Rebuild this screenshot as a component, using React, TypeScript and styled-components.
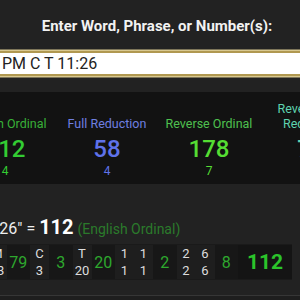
import React from 'react';
import styled, { createGlobalStyle } from 'styled-components';

const GlobalStyle = createGlobalStyle`
  html, body {
    margin: 0;
    padding: 0;
    background: #222;
    overflow: hidden;
  }

  body {
    font-family: Roboto, 'Liberation Sans', sans-serif;
    color: #eee;
  }
`;

const Page = styled.div`
  width: 322px;
  margin-left: -4px;
  padding-top: 17px;
`;

const Title = styled.h2`
  margin: 0;
  font-size: 15px;
  line-height: 18px;
  font-weight: 700;
  color: #f2f2f2;
  text-align: center;
`;

const Field = styled.input`
  display: block;
  box-sizing: border-box;
  width: 100%;
  height: 25px;
  margin: 16px 0 0;
  padding: 0 4px;
  border: 2px solid #b09850;
  box-shadow: 0 0 0 1.5px #d8c890;
  background: #fff;
  outline: none;
  font-family: Roboto, 'Liberation Sans', sans-serif;
  font-size: 16px;
  color: #222;
`;

const CipherPanel = styled.div`
  margin-top: 16px;
  background: #121212;
  padding: 9px 0 6px;
`;

const CipherRow = styled.div`
  display: flex;
  align-items: flex-end;
  margin-left: -42px;
`;

const Cipher = styled.div<{ $w: number }>`
  flex: 0 0 ${({ $w }) => $w}px;
  display: flex;
  flex-direction: column;
  align-items: center;
  text-align: center;
`;

const Label = styled.div<{ $c: string }>`
  font-size: 12.5px;
  line-height: 15px;
  margin-bottom: 4px;
  color: ${({ $c }) => $c};
`;

const Value = styled.div<{ $c: string }>`
  font-size: 24px;
  line-height: 29px;
  font-weight: 500;
  color: ${({ $c }) => $c};
`;

const Sub = styled.div<{ $c: string }>`
  font-size: 12px;
  line-height: 14px;
  color: ${({ $c }) => $c};
`;

const Result = styled.div`
  margin-top: 31px;
  margin-left: -79px;
  font-size: 16px;
  line-height: 24px;
  white-space: nowrap;
  color: #eee;
`;

const Total = styled.b`
  font-size: 20px;
  font-weight: 700;
  color: #fff;
`;

const CipherName = styled.span`
  font-size: 14px;
  color: #2b7a2b;
`;

const Breakdown = styled.div`
  display: flex;
  width: max-content;
  margin-top: 3px;
  margin-left: -27.5px;
  padding: 1px 0;
  background: #1a1a1a;
`;

const Letter = styled.div`
  width: 19px;
  display: flex;
  flex-direction: column;
  align-items: center;
  background: #1e1e1e;
  font-size: 13px;
  line-height: 17px;
  color: #ddd;
`;

const WordSum = styled.div`
  width: 23.5px;
  display: flex;
  align-items: center;
  justify-content: center;
  background: #171717;
  font-size: 16px;
  color: #2ea82e;
`;

const GrandTotal = styled.div`
  width: 54px;
  display: flex;
  align-items: center;
  justify-content: center;
  background: #141414;
  font-size: 21px;
  font-weight: 700;
  color: #2bc42b;
`;

const Footer = styled.div`
  margin-top: 15px;
  height: 40px;
  border-top: 1px solid #363636;
  background: #1e1e1e;
`;

const ciphers = [
  { name: 'English Ordinal', value: 112, sub: 4, label: '#38b038', color: '#33cc33', w: 102 },
  { name: 'Full Reduction', value: 58, sub: 4, label: '#6f7fe0', color: '#5f72ea', w: 102 },
  { name: 'Reverse Ordinal', value: 178, sub: 7, label: '#4fc04f', color: '#55dd33', w: 102 },
  { name: 'Reverse Full Reduction', value: 71, sub: 8, label: '#5fd3b0', color: '#5fd3b0', w: 102 }
];

const words: { chars: [string, number][]; sum: number }[] = [
  { chars: [['P', 16], ['M', 13]], sum: 79 },
  { chars: [['C', 3]], sum: 3 },
  { chars: [['T', 20]], sum: 20 },
  { chars: [['1', 1], ['1', 1]], sum: 2 },
  { chars: [['2', 2], ['6', 6]], sum: 8 }
];

const phrase = 'PM C T 11:26';

const App: React.FC = () => {
  return (
    <>
      <GlobalStyle />
      <Page>
        <Title>Enter Word, Phrase, or Number(s):</Title>
        <Field readOnly value={phrase} />
        <CipherPanel>
          <CipherRow>
            {ciphers.map((c) => (
              <Cipher key={c.name} $w={c.w}>
                <Label $c={c.label}>{c.name}</Label>
                <Value $c={c.color}>{c.value}</Value>
                <Sub $c={c.color}>{c.sub}</Sub>
              </Cipher>
            ))}
          </CipherRow>
        </CipherPanel>
        <Result>
          "{phrase}" = <Total>112</Total> <CipherName>(English Ordinal)</CipherName>
        </Result>
        <Breakdown>
          {words.map((word, i) => (
            <React.Fragment key={i}>
              {word.chars.map(([ch, n], j) => (
                <Letter key={j}>
                  <span>{ch}</span>
                  <span>{n}</span>
                </Letter>
              ))}
              <WordSum>{word.sum}</WordSum>
            </React.Fragment>
          ))}
          <GrandTotal>112</GrandTotal>
        </Breakdown>
        <Footer />
      </Page>
    </>
  );
};

export default App;
